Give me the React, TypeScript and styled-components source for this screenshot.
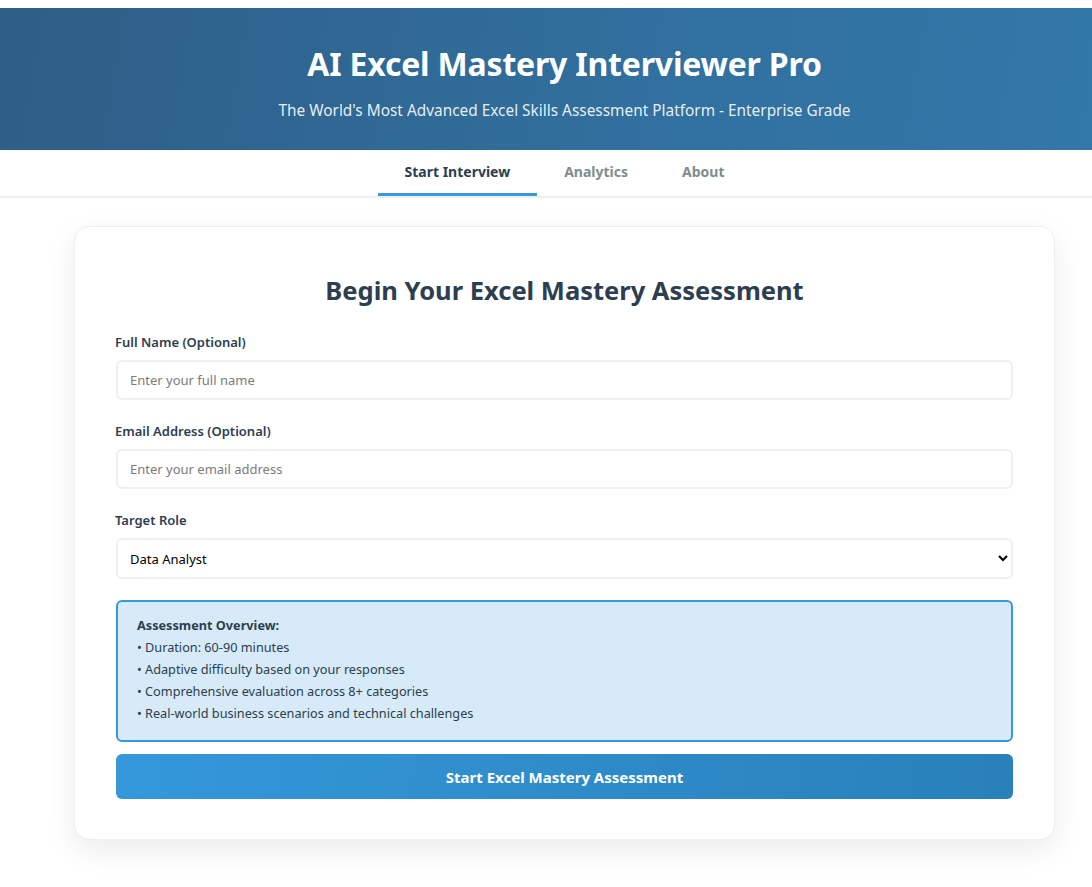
import React from "react";
import styled, { createGlobalStyle } from "styled-components";

const GlobalStyle = createGlobalStyle`
  html, body {
    margin: 0;
    padding: 0;
    background: #ffffff;
    font-family: "Noto Sans", "Open Sans", sans-serif;
  }
  * { box-sizing: border-box; }
`;

const Page = styled.div`
  padding-top: 8px;
  background: #ffffff;
  min-height: 887px;
`;

const Header = styled.header`
  height: 142px;
  background: linear-gradient(100deg, #2e5e86 0%, #31709f 60%, #3278a9 100%);
  color: #ffffff;
  display: flex;
  flex-direction: column;
  align-items: center;
  padding: 36px 37px 0 74px;
`;

const Title = styled.h1`
  margin: 0;
  font-size: 32px;
  line-height: 40px;
  font-weight: 700;
  letter-spacing: -0.2px;
`;

const Subtitle = styled.p`
  margin: 17px 0 0;
  font-size: 15.4px;
  line-height: 20px;
  color: rgba(255, 255, 255, 0.9);
`;

const Nav = styled.nav`
  height: 48px;
  border-bottom: 2px solid #ecf0f1;
  display: flex;
  justify-content: center;
  padding: 0 37px 0 74px;
`;

const Tab = styled.button<{ $active?: boolean }>`
  height: 46px;
  padding: 0 27px;
  border: none;
  background: transparent;
  font-family: inherit;
  font-size: 14px;
  font-weight: 700;
  color: ${(p) => (p.$active ? "#2c3e50" : "#7f8c8d")};
  border-bottom: 3px solid ${(p) => (p.$active ? "#3498db" : "transparent")};
  cursor: pointer;
`;

const Main = styled.main`
  padding: 28px 37px 40px 74px;
`;

const Card = styled.section`
  background: #ffffff;
  border: 1px solid #ecf0f1;
  border-radius: 15px;
  box-shadow: 0 10px 30px rgba(0, 0, 0, 0.08);
  padding: 40px 41px;
  display: flex;
  flex-direction: column;
`;

const Heading = styled.h2`
  margin: 6px 0 26px;
  text-align: center;
  font-size: 25.5px;
  line-height: 34px;
  font-weight: 700;
  color: #2c3e50;
`;

const Group = styled.div`
  display: flex;
  flex-direction: column;
  margin-bottom: 22px;
`;

const Label = styled.label`
  font-size: 13px;
  line-height: 18px;
  font-weight: 600;
  color: #2c3e50;
  margin: 0 0 9px -1px;
`;

const Input = styled.input`
  height: 40px;
  border: 2px solid #ecf0f1;
  border-radius: 6px;
  padding: 0 12px;
  font-family: inherit;
  font-size: 13px;
  color: #2c3e50;
  background: #ffffff;
  outline: none;
  &::placeholder { color: #7b7b7b; }
`;

const Select = styled.select`
  height: 41px;
  border: 2px solid #ecf0f1;
  border-radius: 6px;
  padding: 0 8px;
  font-family: inherit;
  font-size: 13px;
  color: #000000;
  background: #ffffff;
  outline: none;
`;

const InfoBox = styled.div`
  margin-top: -1px;
  border: 2px solid #3498db;
  border-radius: 6px;
  background: #d6eaf8;
  padding: 12px 19px 16px;
  color: #2c3e50;
  font-size: 12.7px;
  line-height: 22px;
`;

const InfoTitle = styled.div`
  font-weight: 700;
`;

const InfoItem = styled.div``;

const StartButton = styled.button`
  margin-top: 12px;
  height: 45px;
  border: none;
  border-radius: 6px;
  background: linear-gradient(100deg, #3498db 0%, #2980b9 100%);
  color: #ffffff;
  font-family: inherit;
  font-size: 15px;
  font-weight: 700;
  cursor: pointer;
`;

export default function App() {
  return (
    <>
      <GlobalStyle />
      <Page>
        <Header>
          <Title>AI Excel Mastery Interviewer Pro</Title>
          <Subtitle>
            The World's Most Advanced Excel Skills Assessment Platform - Enterprise Grade
          </Subtitle>
        </Header>
        <Nav>
          <Tab $active>Start Interview</Tab>
          <Tab>Analytics</Tab>
          <Tab>About</Tab>
        </Nav>
        <Main>
          <Card>
            <Heading>Begin Your Excel Mastery Assessment</Heading>
            <Group>
              <Label>Full Name (Optional)</Label>
              <Input placeholder="Enter your full name" />
            </Group>
            <Group>
              <Label>Email Address (Optional)</Label>
              <Input placeholder="Enter your email address" />
            </Group>
            <Group>
              <Label>Target Role</Label>
              <Select defaultValue="Data Analyst">
                <option>Data Analyst</option>
                <option>Financial Analyst</option>
                <option>Business Analyst</option>
              </Select>
            </Group>
            <InfoBox>
              <InfoTitle>Assessment Overview:</InfoTitle>
              <InfoItem>• Duration: 60-90 minutes</InfoItem>
              <InfoItem>• Adaptive difficulty based on your responses</InfoItem>
              <InfoItem>• Comprehensive evaluation across 8+ categories</InfoItem>
              <InfoItem>• Real-world business scenarios and technical challenges</InfoItem>
            </InfoBox>
            <StartButton>Start Excel Mastery Assessment</StartButton>
          </Card>
        </Main>
      </Page>
    </>
  );
}
